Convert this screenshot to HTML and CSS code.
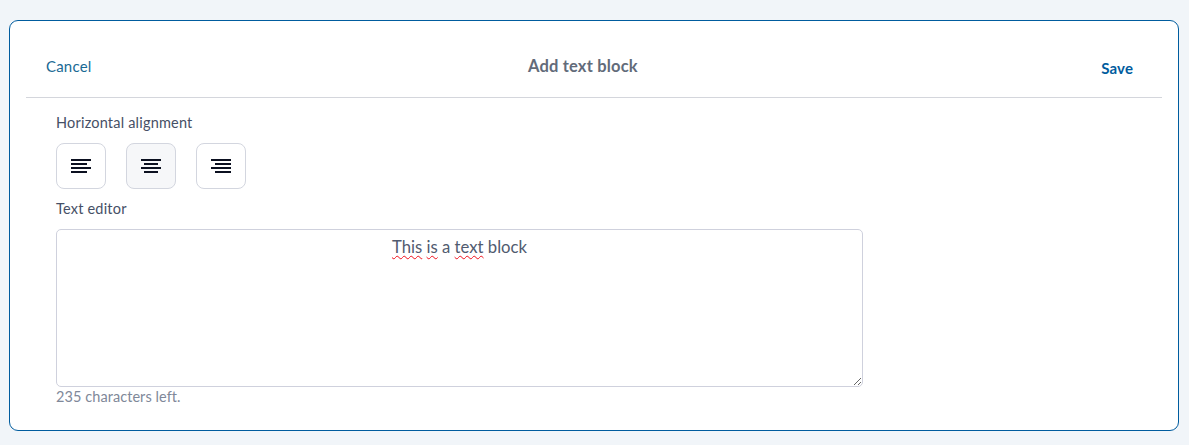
FILE: index.html
```html
<!DOCTYPE html>
<html lang="en">
<head>
<meta charset="utf-8">
<title>Add text block</title>
<link rel="stylesheet" href="styles.css">
</head>
<body>
<div class="card">
  <header class="head">
    <a class="cancel">Cancel</a>
    <h1 class="title">Add text block</h1>
    <a class="save">Save</a>
  </header>
  <div class="form">
    <div class="label">Horizontal alignment</div>
    <div class="aligns">
      <button class="align">
        <svg width="20" height="16" viewBox="0 0 20 16"><path d="M0 2h20M0 6h16M0 10h20M0 14h16" stroke="#0b1020" stroke-width="2"/></svg>
      </button>
      <button class="align active">
        <svg width="20" height="16" viewBox="0 0 20 16"><path d="M0 2h20M3 6h14M0 10h20M3 14h14" stroke="#0b1020" stroke-width="2"/></svg>
      </button>
      <button class="align">
        <svg width="20" height="16" viewBox="0 0 20 16"><path d="M0 2h20M4 6h16M0 10h20M4 14h16" stroke="#0b1020" stroke-width="2"/></svg>
      </button>
    </div>
    <div class="label second">Text editor</div>
    <div class="editor"><span class="typo">This</span> <span class="typo">is</span> a <span class="typo">text</span> block</div>
    <div class="hint">235 characters left.</div>
  </div>
</div>
</body>
</html>
```
FILE: styles.css
```css
* { box-sizing: border-box; }
html, body { height: 100%; }
body {
  margin: 0;
  padding: 20px 10px 14px 9px;
  background: #f1f5f9;
  font-family: "Lato", "Open Sans", sans-serif;
  color: #465066;
}
.card {
  height: 411px;
  background: #fff;
  border: 1px solid #005c9e;
  border-radius: 9px;
  padding: 0 16px;
}
.head {
  height: 77px;
  border-bottom: 1px solid #d4d6dc;
  display: grid;
  grid-template-columns: 482px auto 1fr;
  align-items: center;
  padding: 16px 29px 0 20px;
}
.cancel { font-size: 15px; color: #1a6a94; letter-spacing: .2px; margin-top: -2px; }
.title { margin: -2px 0 0; font-size: 16.5px; font-weight: 700; color: #626b7a; letter-spacing: .18px; }
.save { justify-self: end; font-size: 15px; font-weight: 700; color: #005c9e; letter-spacing: .1px; margin-top: 2px; }
.form { padding: 16px 0 0 30px; }
.label { font-size: 14.5px; line-height: 18px; letter-spacing: .2px; }
.second { margin-top: 11px; }
.aligns { display: flex; gap: 20px; margin-top: 11px; }
.align {
  width: 50px;
  height: 46px;
  padding: 0;
  display: flex;
  align-items: center;
  justify-content: center;
  background: #fff;
  border: 1px solid #d3d6df;
  border-radius: 8px;
}
.active { background: #f6f7f9; }
.editor {
  margin-top: 11px;
  width: 807px;
  height: 158px;
  border: 1px solid #cfd1dd;
  border-radius: 5px;
  padding: 8px;
  text-align: center;
  font-size: 16.7px;
  line-height: 19px;
  color: #515b6f;
  resize: both;
  overflow: auto;
}
.typo { text-decoration: underline wavy #f0101c 1.2px; text-underline-offset: 2px; }
.hint { margin-top: 1px; font-size: 14.5px; line-height: 18px; letter-spacing: .07px; color: #808899; }
```
